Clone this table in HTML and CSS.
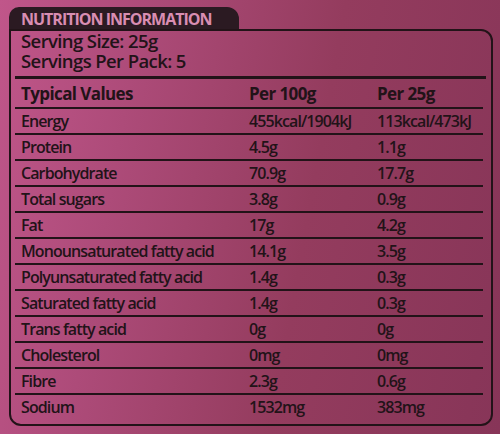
FILE: index.html
```
<!DOCTYPE html>
<html lang="en">
<head>
    <meta charset="UTF-8">
    <meta name="viewport" content="width=device-width, initial-scale=1.0">
    <title>Nutrition Information</title>
    <link rel="stylesheet" href="styles.css">
</head>
<body>

<div class="label">
    <div class="tab">NUTRITION INFORMATION</div>
    <div class="box">
        <div class="serving">
            <div>Serving Size: 25g</div>
            <div>Servings Per Pack: 5</div>
        </div>
        <table class="facts">
            <tr class="head">
                <td>Typical Values</td>
                <td>Per 100g</td>
                <td>Per 25g</td>
            </tr>
            <tr><td>Energy</td><td>455kcal/1904kJ</td><td>113kcal/473kJ</td></tr>
            <tr><td>Protein</td><td>4.5g</td><td>1.1g</td></tr>
            <tr><td>Carbohydrate</td><td>70.9g</td><td>17.7g</td></tr>
            <tr><td class="sub">Total sugars</td><td>3.8g</td><td>0.9g</td></tr>
            <tr><td>Fat</td><td>17g</td><td>4.2g</td></tr>
            <tr><td>Monounsaturated fatty acid</td><td>14.1g</td><td>3.5g</td></tr>
            <tr><td>Polyunsaturated fatty acid</td><td>1.4g</td><td>0.3g</td></tr>
            <tr><td>Saturated fatty acid</td><td>1.4g</td><td>0.3g</td></tr>
            <tr><td>Trans fatty acid</td><td>0g</td><td>0g</td></tr>
            <tr><td>Cholesterol</td><td>0mg</td><td>0mg</td></tr>
            <tr><td>Fibre</td><td>2.3g</td><td>0.6g</td></tr>
            <tr class="last"><td>Sodium</td><td>1532mg</td><td>383mg</td></tr>
        </table>
    </div>
</div>

</body>
</html>
```

FILE: styles.css
```
body {
    margin: 0;
    height: 434px;
    overflow: hidden;
    font-family: 'Open Sans', 'Noto Sans', sans-serif;
    color: #221318;
    background: linear-gradient(100deg, #c0568a 0%, #ad4b79 25%, #943c5e 60%, #873558 100%);
}

.label {
    padding: 7px 7px 0 9px;
}

.tab {
    width: 218px;
    height: 22px;
    padding-left: 12px;
    background-color: #2b1a22;
    border-radius: 10px 12px 0 0;
    color: #d98db2;
    font-size: 16px;
    font-weight: 700;
    line-height: 24px;
    letter-spacing: -1px;
}

.box {
    height: 393px;
    border: 2px solid #221318;
    border-radius: 0 12px 12px 12px;
    padding: 0 8px 0 4px;
}

.serving {
    padding: 0 0 5px 6px;
    border-bottom: 3px solid #221318;
    font-size: 18.5px;
    font-weight: 600;
    line-height: 20px;
    letter-spacing: -0.6px;
    margin-right: -3px;
}

.facts {
    width: 100%;
    border-collapse: collapse;
    font-size: 16px;
    font-weight: 600;
    letter-spacing: -0.9px;
}

.facts td {
    height: 24px;
    padding: 0 0 0 6px;
    border-bottom: 2px solid #221318;
    white-space: nowrap;
}

.facts td:nth-child(1) {
    width: 222px;
}

.facts td:nth-child(2) {
    width: 122px;
}

.facts .head td {
    height: 28px;
    font-size: 17px;
    font-weight: 700;
    letter-spacing: -0.6px;
}

.facts .last td {
    border-bottom: none;
}
```
